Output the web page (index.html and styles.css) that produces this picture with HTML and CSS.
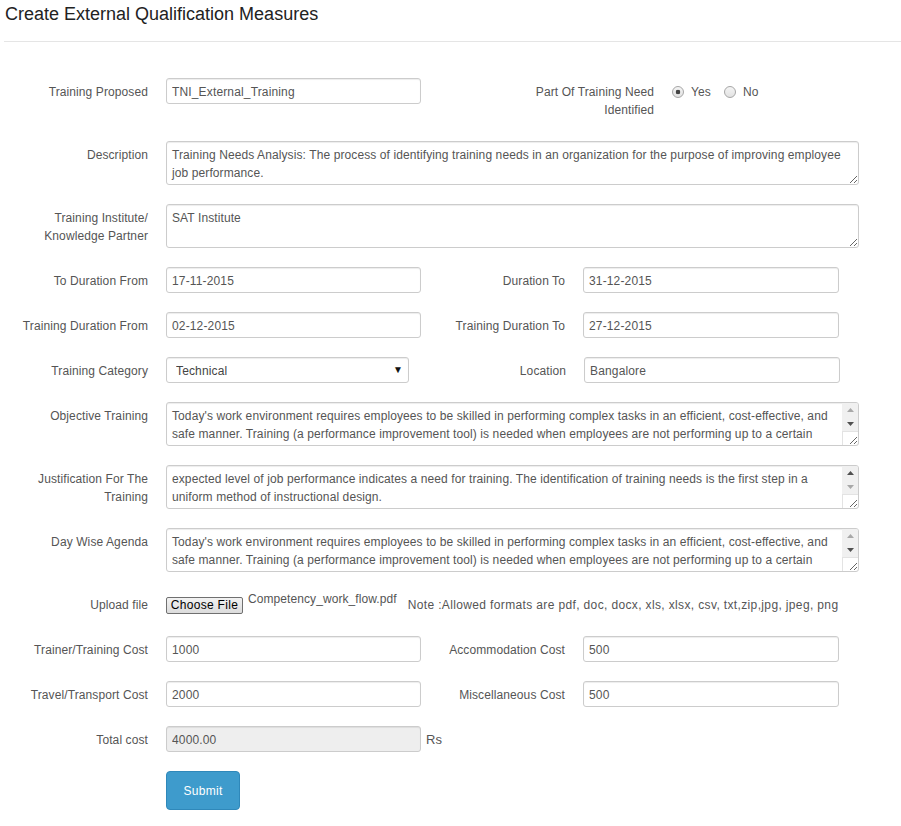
FILE: index.html
```html
<!DOCTYPE html>
<html lang="en">
<head>
<meta charset="utf-8">
<title>Create External Qualification Measures</title>
<link rel="stylesheet" href="styles.css">
</head>
<body>
<header class="page-head">
  <h1>Create External Qualification Measures</h1>
</header>
<form class="form">
  <div class="row">
    <label class="lbl">Training Proposed</label>
    <input class="ctl w255" type="text" value="TNI_External_Training">
    <label class="lbl lbl-ident">Part Of Training Need Identified</label>
    <div class="radios">
      <label class="radio-opt"><input type="radio" name="tni" checked><span>Yes</span></label>
      <label class="radio-opt"><input type="radio" name="tni"><span>No</span></label>
    </div>
  </div>

  <div class="row">
    <label class="lbl">Description</label>
    <textarea class="ctl ta">Training Needs Analysis: The process of identifying training needs in an organization for the purpose of improving employee job performance.</textarea>
  </div>

  <div class="row">
    <label class="lbl">Training Institute/ Knowledge Partner</label>
    <textarea class="ctl ta">SAT Institute</textarea>
  </div>

  <div class="row">
    <label class="lbl">To Duration From</label>
    <input class="ctl w255" type="text" value="17-11-2015">
    <label class="lbl lbl-r">Duration To</label>
    <input class="ctl w256" type="text" value="31-12-2015">
  </div>

  <div class="row">
    <label class="lbl">Training Duration From</label>
    <input class="ctl w255" type="text" value="02-12-2015">
    <label class="lbl lbl-r">Training Duration To</label>
    <input class="ctl w256" type="text" value="27-12-2015">
  </div>

  <div class="row">
    <label class="lbl">Training Category</label>
    <div class="select-wrap">
      <select class="ctl sel">
        <option selected>Technical</option>
        <option>Behavioural</option>
      </select>
    </div>
    <label class="lbl lbl-loc">Location</label>
    <input class="ctl w256" type="text" value="Bangalore">
  </div>

  <div class="row">
    <label class="lbl">Objective Training</label>
    <div class="ta-wrap">
      <textarea class="ctl ta ta-scroll">Today's work environment requires employees to be skilled in performing complex tasks in an efficient, cost-effective, and safe manner. Training (a performance improvement tool) is needed when employees are not performing up to a certain expected level of job performance indicates a need for training. The identification of training needs is the first step in a uniform method of instructional design.</textarea>
      <div class="sb">
        <span class="sb-btn off"><svg width="7" height="4" viewBox="0 0 7 4"><path d="M0 4L3.5 0L7 4Z"/></svg></span>
        <span class="sb-btn"><svg width="7" height="4" viewBox="0 0 7 4"><path d="M0 0L3.5 4L7 0Z"/></svg></span>
      </div>
      <div class="sb-corner"></div>
    </div>
  </div>

  <div class="row">
    <label class="lbl">Justification For The Training</label>
    <div class="ta-wrap">
      <textarea class="ctl ta ta-scroll">expected level of job performance indicates a need for training. The identification of training needs is the first step in a uniform method of instructional design.</textarea>
      <div class="sb">
        <span class="sb-btn"><svg width="7" height="4" viewBox="0 0 7 4"><path d="M0 4L3.5 0L7 4Z"/></svg></span>
        <span class="sb-btn off"><svg width="7" height="4" viewBox="0 0 7 4"><path d="M0 0L3.5 4L7 0Z"/></svg></span>
      </div>
      <div class="sb-corner"></div>
    </div>
  </div>

  <div class="row">
    <label class="lbl">Day Wise Agenda</label>
    <div class="ta-wrap">
      <textarea class="ctl ta ta-scroll">Today's work environment requires employees to be skilled in performing complex tasks in an efficient, cost-effective, and safe manner. Training (a performance improvement tool) is needed when employees are not performing up to a certain expected level of job performance indicates a need for training.</textarea>
      <div class="sb">
        <span class="sb-btn off"><svg width="7" height="4" viewBox="0 0 7 4"><path d="M0 4L3.5 0L7 4Z"/></svg></span>
        <span class="sb-btn"><svg width="7" height="4" viewBox="0 0 7 4"><path d="M0 0L3.5 4L7 0Z"/></svg></span>
      </div>
      <div class="sb-corner"></div>
    </div>
  </div>

  <div class="row">
    <label class="lbl">Upload file</label>
    <div class="upload">
      <button type="button" class="file-btn">Choose File</button>
      <span class="file-name">Competency_work_flow.pdf</span>
      <span class="note">Note :Allowed formats are pdf, doc, docx, xls, xlsx, csv, txt,zip,jpg, jpeg, png</span>
    </div>
  </div>

  <div class="row">
    <label class="lbl">Trainer/Training Cost</label>
    <input class="ctl w255" type="text" value="1000">
    <label class="lbl lbl-r">Accommodation Cost</label>
    <input class="ctl w256" type="text" value="500">
  </div>

  <div class="row">
    <label class="lbl">Travel/Transport Cost</label>
    <input class="ctl w255" type="text" value="2000">
    <label class="lbl lbl-r">Miscellaneous Cost</label>
    <input class="ctl w256" type="text" value="500">
  </div>

  <div class="row">
    <label class="lbl">Total cost</label>
    <input class="ctl w255 ro" type="text" value="4000.00" readonly>
    <span class="unit">Rs</span>
  </div>

  <div class="row">
    <span class="lbl"></span>
    <button type="button" class="submit">Submit</button>
  </div>
</form>
</body>
</html>
```

FILE: styles.css
```css
html, body {
  margin: 0;
  background: #fff;
}
body {
  font-family: "Liberation Sans", Arial, sans-serif;
  font-size: 12px;
  color: #555;
}

.page-head {
  margin: 0 0 0 4px;
  padding: 4px 0 17px 1px;
  border-bottom: 1px solid #e5e5e5;
}
.page-head h1 {
  margin: 0;
  font-size: 18px;
  line-height: 20px;
  font-weight: normal;
  color: #222;
}

.form {
  padding-top: 36px;
}

.row {
  display: flex;
  align-items: flex-start;
  margin-bottom: 19px;
}

.lbl {
  flex: none;
  box-sizing: border-box;
  width: 148px;
  margin-right: 18px;
  padding: 5px 0 3px;
  line-height: 18px;
  text-align: right;
  letter-spacing: 0.1px;
  min-height: 26px;
}
.lbl-r { width: 144px; }
.lbl-loc { width: 157px; }
.lbl-ident { width: 125px; margin-left: 108px; }

.ctl {
  flex: none;
  box-sizing: border-box;
  height: 26px;
  margin: 0;
  padding: 5px 5px 3px;
  border: 1px solid #ccc;
  border-radius: 3px;
  background: #fff;
  font-family: inherit;
  font-size: 12px;
  letter-spacing: 0.15px;
  color: #555;
  box-shadow: inset 0 1px 1px rgba(0, 0, 0, 0.075);
  outline: none;
}
.w255 { width: 255px; }
.w256 { width: 256px; }
.ro { background: #eee; }

.ta {
  display: block;
  width: 693px;
  height: 44px;
  padding: 4px 5px 3px;
  line-height: 18px;
  letter-spacing: 0.1px;
  overflow: hidden;
  resize: both;
}
.ta-scroll { padding-right: 22px; }

.ta-wrap {
  position: relative;
  flex: none;
  width: 693px;
  height: 44px;
}
.sb {
  position: absolute;
  top: 1px;
  right: 1px;
  width: 16px;
  height: 28px;
  background: #f0f0f0;
  display: flex;
  flex-direction: column;
  pointer-events: none;
  border-top-right-radius: 2px;
}
.sb-btn {
  flex: 1;
  display: flex;
  align-items: center;
  justify-content: center;
  fill: #505050;
}
.sb-btn.off { fill: #a8a8a8; }
.sb-corner {
  position: absolute;
  right: 1px;
  bottom: 1px;
  box-sizing: border-box;
  width: 16px;
  height: 14px;
  border-top: 1px solid #e3e3e3;
  border-left: 1px solid #e3e3e3;
  pointer-events: none;
}

.select-wrap {
  position: relative;
  flex: none;
  width: 243px;
}
.select-wrap::after {
  content: "\25BC";
  position: absolute;
  right: 6px;
  top: 8px;
  font-size: 10px;
  line-height: 10px;
  color: #111;
  pointer-events: none;
}
.sel {
  width: 243px;
  padding: 4px 20px 2px 9px;
  -webkit-appearance: none;
  appearance: none;
  color: #444;
}

.radios {
  display: flex;
  align-items: center;
  padding: 5px 0 3px;
  height: 18px;
}
.radio-opt {
  display: flex;
  align-items: center;
  margin-right: 13px;
  line-height: 18px;
  letter-spacing: 0.1px;
}
.radio-opt input {
  -webkit-appearance: none;
  appearance: none;
  box-sizing: border-box;
  width: 12px;
  height: 12px;
  margin: 0 7px 0 0;
  border: 1px solid #a6a6a6;
  border-radius: 50%;
  background: linear-gradient(#f4f4f4, #e2e2e2);
}
.radio-opt input:checked {
  background: radial-gradient(circle, #444 0, #444 2px, transparent 2.6px), linear-gradient(#f4f4f4, #e2e2e2);
}

.upload {
  display: flex;
  align-items: flex-start;
  white-space: nowrap;
}
.file-btn {
  box-sizing: border-box;
  width: 77px;
  height: 17px;
  margin: 6px 0 0;
  padding: 0;
  border: 1px solid #707070;
  border-radius: 2px;
  background: linear-gradient(#f2f2f2, #dcdcdc);
  font-family: inherit;
  font-size: 12px;
  letter-spacing: 0.3px;
  line-height: 15px;
  color: #000;
}
.file-name {
  margin: 1px 0 0 5px;
  line-height: 14px;
  letter-spacing: 0.08px;
}
.note {
  margin-left: 11px;
  padding-top: 5px;
  line-height: 18px;
  letter-spacing: 0.36px;
}

.unit {
  margin-left: 5px;
  padding-top: 5px;
  line-height: 18px;
  font-size: 13px;
}

.submit {
  box-sizing: border-box;
  width: 74px;
  height: 39px;
  margin: 0;
  padding: 0;
  border: 1px solid #2f88ba;
  border-radius: 4px;
  background: #3e9bcc;
  color: #fff;
  font-family: inherit;
  font-size: 12px;
  letter-spacing: 0.3px;
}
```
